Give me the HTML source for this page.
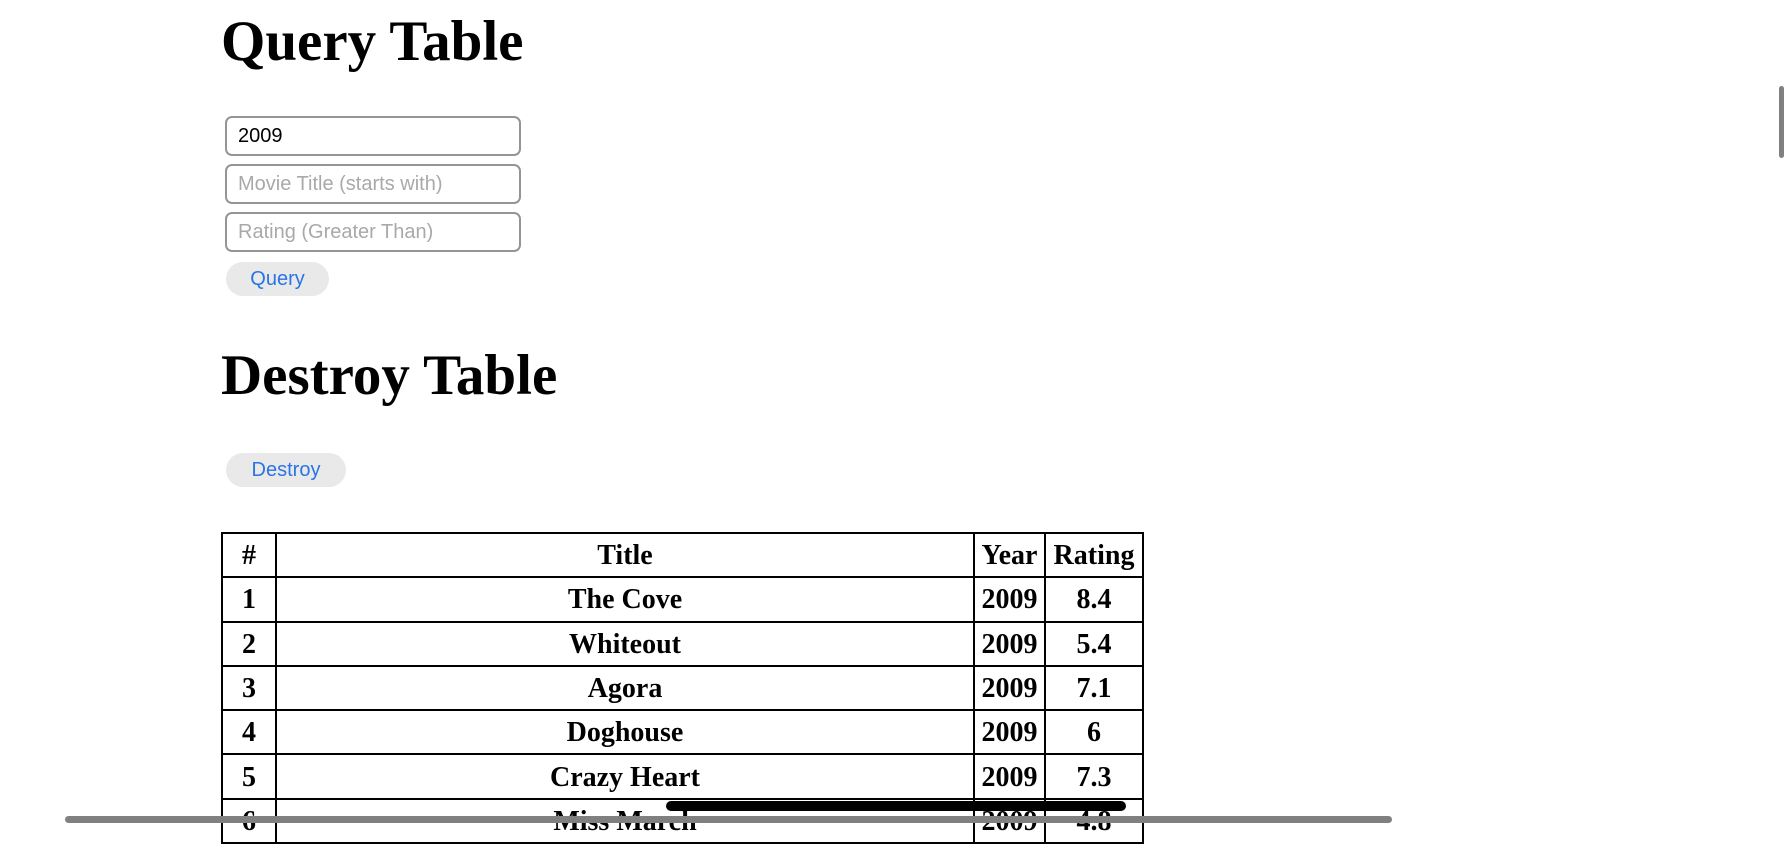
<!DOCTYPE html>
<html><head><style>
body{margin:0;width:1792px;height:828px;overflow:hidden;background:#fff;position:relative;font-family:"Liberation Serif",serif}
h1{position:absolute;left:221px;margin:0;font-size:57px;font-weight:bold;line-height:1}
input{position:absolute;left:225px;width:296px;height:40px;box-sizing:border-box;border:2px solid #959595;border-radius:7px;font-family:"Liberation Sans",sans-serif;font-size:20px;padding:0 0 0 11px;color:#000;outline:none}
input::placeholder{color:#a9a9a9}
.btn{position:absolute;left:226px;height:34px;background:#e9e9e9;border-radius:17px;color:#2a74e6;font-family:"Liberation Sans",sans-serif;font-size:20px;line-height:34px;text-align:center}
table{position:absolute;left:221px;top:532px;border-collapse:collapse;font-size:28px;font-weight:bold;text-align:center}
td,th{border:2px solid #000;height:42.3px;padding:0;padding-top:2px;box-sizing:border-box}
tr{height:44.3px}
.bar{position:absolute;border-radius:4px}
</style></head><body>
<h1 style="top:13px">Query Table</h1>
<input style="top:116px" value="2009">
<input style="top:164px" placeholder="Movie Title (starts with)">
<input style="top:212px" placeholder="Rating (Greater Than)">
<div class="btn" style="top:262px;width:103px">Query</div>
<h1 style="top:347px">Destroy Table</h1>
<div class="btn" style="top:453px;width:120px">Destroy</div>
<table>
<tr><th style="width:54px">#</th><th style="width:698px">Title</th><th style="width:71px">Year</th><th style="width:98px">Rating</th></tr>
<tr><td>1</td><td>The Cove</td><td>2009</td><td>8.4</td></tr>
<tr><td>2</td><td>Whiteout</td><td>2009</td><td>5.4</td></tr>
<tr><td>3</td><td>Agora</td><td>2009</td><td>7.1</td></tr>
<tr><td>4</td><td>Doghouse</td><td>2009</td><td>6</td></tr>
<tr><td>5</td><td>Crazy Heart</td><td>2009</td><td>7.3</td></tr>
<tr><td>6</td><td>Miss March</td><td>2009</td><td>4.8</td></tr>
</table>
<div class="bar" style="left:1779px;top:86px;width:5px;height:72px;background:#808080"></div>
<div class="bar" style="left:65px;top:816px;width:1327px;height:7px;background:#808080"></div>
<div class="bar" style="left:666px;top:801px;width:460px;height:10px;background:#000;border-radius:5px"></div>
</body></html>
